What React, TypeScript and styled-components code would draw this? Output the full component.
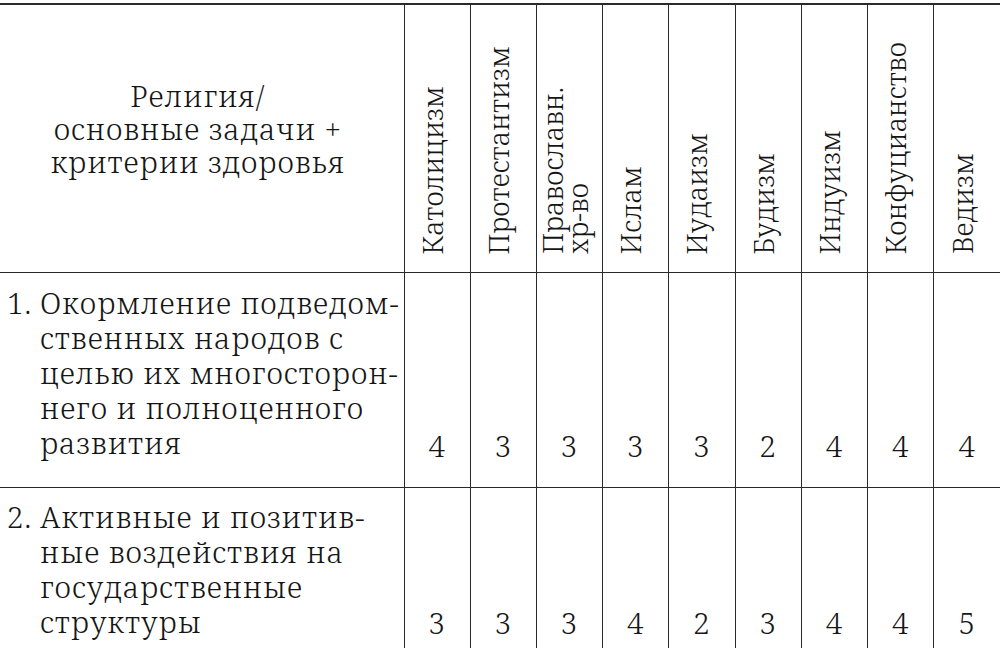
import React from "react";
import styled, { createGlobalStyle } from "styled-components";

const Global = createGlobalStyle`
  html, body { margin: 0; padding: 0; background: #fff; }
  body { width: 1000px; height: 655px; overflow: hidden; }
`;

const Table = styled.table`
  width: 1000px;
  margin-top: 3px;
  border-collapse: collapse;
  table-layout: fixed;
  font-family: "Noto Serif", "Liberation Serif", serif;
  font-size: 29.5px;
  font-weight: 350;
  letter-spacing: 0.9px;
  color: #161616;
  border-top: 2px solid #2a2a2a;
`;

const FirstCol = styled.col`
  width: 404px;
`;

const HeadRow = styled.tr`
  height: 268px;
`;

const BodyRow = styled.tr<{ $h: number; $last?: boolean }>`
  height: ${(p) => p.$h}px;
  border-bottom: ${(p) => (p.$last ? "none" : "1px solid #2a2a2a")};
`;

const TitleCell = styled.th`
  font-weight: inherit;
  vertical-align: top;
  text-align: center;
  line-height: 33px;
  padding: 74px 8px 0 0;
  border-right: 1px solid #2a2a2a;
  border-bottom: 1px solid #2a2a2a;
`;

const ReligionCell = styled.th<{ $end?: boolean }>`
  font-weight: inherit;
  vertical-align: bottom;
  text-align: center;
  padding: 0 10px 8px 0;
  border-right: ${(p) => (p.$end ? "none" : "1px solid #2a2a2a")};
  border-bottom: 1px solid #2a2a2a;
`;

const Rotated = styled.span`
  display: inline-block;
  writing-mode: vertical-rl;
  transform: rotate(180deg);
  white-space: nowrap;
  font-size: 27.5px;
  letter-spacing: 0;
  line-height: 25px;
  text-align: start;
`;

const TaskCell = styled.td<{ $pt: number; $pb: number }>`
  vertical-align: top;
  padding: ${(p) => p.$pt}px 0 ${(p) => p.$pb}px 7px;
  line-height: 35px;
  border-right: 1px solid #2a2a2a;
`;

const Task = styled.div`
  display: flex;
`;

const TaskNum = styled.span`
  flex: 0 0 33px;
`;

const TaskText = styled.span`
  white-space: nowrap;
`;

const ScoreCell = styled.td<{ $pb: number; $end?: boolean }>`
  vertical-align: bottom;
  text-align: center;
  line-height: 35px;
  padding: 0 0 ${(p) => p.$pb}px 0;
  border-right: ${(p) => (p.$end ? "none" : "1px solid #2a2a2a")};
`;

const religions: string[][] = [
  ["Католицизм"],
  ["Протестантизм"],
  ["Православн.", "хр-во"],
  ["Ислам"],
  ["Иудаизм"],
  ["Будизм"],
  ["Индуизм"],
  ["Конфуцианство"],
  ["Ведизм"],
];

const rows = [
  {
    n: "1.",
    lines: [
      "Окормление подведом-",
      "ственных народов с",
      "целью их многосторон-",
      "него и полноценного",
      "развития",
    ],
    scores: [4, 3, 3, 3, 3, 2, 4, 4, 4],
    h: 215,
    pt: 12,
    pb: 24,
  },
  {
    n: "2.",
    lines: [
      "Активные и позитив-",
      "ные воздействия на",
      "государственные",
      "структуры",
    ],
    scores: [3, 3, 3, 4, 2, 3, 4, 4, 5],
    h: 161,
    pt: 11,
    pb: 8,
  },
];

export default function App() {
  return (
    <>
      <Global />
      <Table>
        <colgroup>
          <FirstCol />
          {religions.map((_, i) => (
            <col key={i} />
          ))}
        </colgroup>
        <thead>
          <HeadRow>
            <TitleCell>
              Религия/
              <br />
              основные задачи +
              <br />
              критерии здоровья
            </TitleCell>
            {religions.map((r, i) => (
              <ReligionCell key={i} $end={i === religions.length - 1}>
                <Rotated>
                  {r.map((line, j) => (
                    <React.Fragment key={j}>
                      {j > 0 && <br />}
                      {line}
                    </React.Fragment>
                  ))}
                </Rotated>
              </ReligionCell>
            ))}
          </HeadRow>
        </thead>
        <tbody>
          {rows.map((row, ri) => (
            <BodyRow key={ri} $h={row.h} $last={ri === rows.length - 1}>
              <TaskCell $pt={row.pt} $pb={row.pb}>
                <Task>
                  <TaskNum>{row.n}</TaskNum>
                  <TaskText>
                    {row.lines.map((l, li) => (
                      <React.Fragment key={li}>
                        {li > 0 && <br />}
                        {l}
                      </React.Fragment>
                    ))}
                  </TaskText>
                </Task>
              </TaskCell>
              {row.scores.map((s, si) => (
                <ScoreCell key={si} $pb={row.pb} $end={si === row.scores.length - 1}>
                  {s}
                </ScoreCell>
              ))}
            </BodyRow>
          ))}
        </tbody>
      </Table>
    </>
  );
}
